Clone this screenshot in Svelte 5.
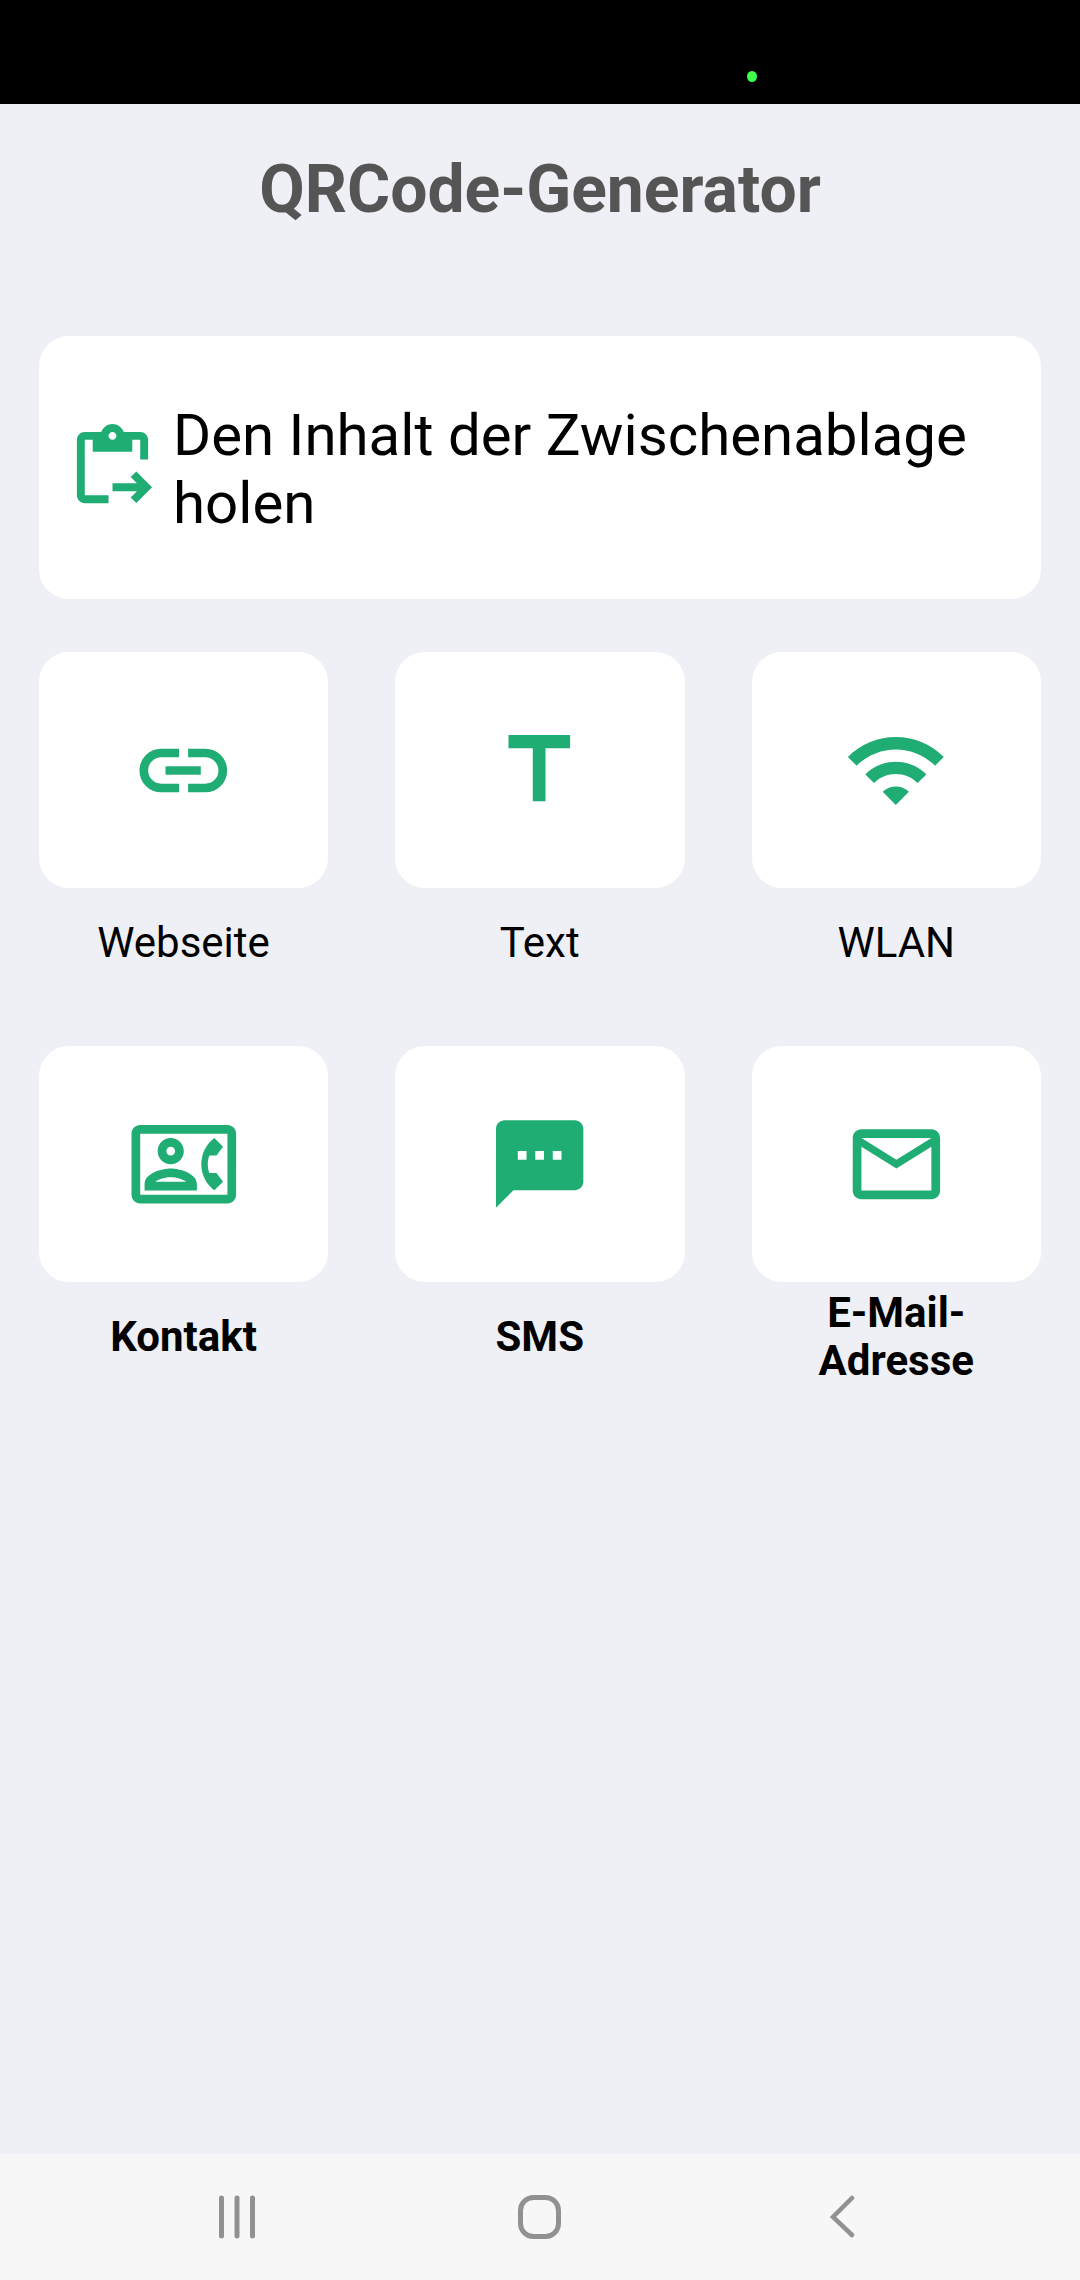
<script>
  const tiles = [
    { label: 'Webseite', vb: '4.2 -1 120 100', id: 'link' },
    { label: 'Text', vb: '0.2 -1 120 100', id: 't' },
    { label: 'WLAN', vb: '6.5 -1 120 100', id: 'wifi' },
    { label: 'Kontakt', vb: '3.5 3 120 100', id: 'contact', bold: true },
    { label: 'SMS', vb: '-0.25 3 120 100', id: 'sms', bold: true },
    { label: 'E-Mail-Adresse', vb: '6 3 120 100', id: 'mail', bold: true }
  ];
</script>

<div class="page">
  <div class="status"><span class="dot"></span></div>
  <h1>QRCode-Generator</h1>

  <div class="card">
    <svg class="clip" viewBox="0 0 24 24" aria-hidden="true">
      <path d="M5,5h2v3h10V5h2v5h2V5c0-1.1-0.9-2-2-2h-4.18C14.4,1.84,13.3,1,12,1S9.6,1.84,9.18,3H5C3.9,3,3,3.9,3,5v14c0,1.1,0.9,2,2,2h6v-2H5V5z M12,3c0.55,0,1,0.45,1,1s-0.45,1-1,1s-1-0.45-1-1S11.45,3,12,3z" />
      <path d="M18.01,13l-1.42,1.41l1.58,1.58H12v2h6.17l-1.58,1.58l1.42,1.41l3.99-4L18.01,13z" />
    </svg>
    <span class="cardtext">Den Inhalt der Zwischenablage holen</span>
  </div>

  <div class="grid">
    {#each tiles as t}
      <div class="item">
        <div class="tile">
          <svg class="ico" viewBox={t.vb} aria-hidden="true">
            {#if t.id === 'link'}
              <path class="st" d="M59.3 32H41.5a17.5 17.5 0 0 0 0 35H59.3" />
              <path class="st" d="M68.3 32H85.5a17.5 17.5 0 0 1 0 35H68.3" />
              <rect x="45.7" y="45.3" width="35.3" height="8.4" />
            {:else if t.id === 't'}
              <path d="M28.7 14H90.3V27.3H65.7V80.3H53V27.3H28.7z" />
            {:else if t.id === 'wifi'}
              <path transform="translate(14 -3.3) scale(4.36)" d="M1 9l2 2c4.97-4.97 13.03-4.97 18 0l2-2C16.93 2.93 7.08 2.93 1 9zm8 8l3 3 3-3c-1.65-1.66-4.34-1.66-6 0zm-4-4l2 2c2.76-2.76 7.24-2.76 10 0l2-2C15.14 9.14 8.87 9.14 5 13z" />
            {:else if t.id === 'contact'}
              <path transform="translate(11 0.9) scale(4.36)" d="M22 3H2C.9 3 0 3.9 0 5v14c0 1.1.9 2 2 2h20c1.1 0 1.99-.9 1.99-2L24 5c0-1.1-.9-2-2-2zm0 16H2V5h20v14zm-2.99-1.01L21 16l-1.51-2h-1.64c-.22-.63-.35-1.3-.35-2s.13-1.37.35-2h1.64L21 8l-1.99-1.99c-1.31.98-2.28 2.37-2.73 3.99-.18.64-.28 1.31-.28 2s.1 1.36.28 2c.45 1.61 1.42 3.01 2.73 3.99zM9 12c1.65 0 3-1.35 3-3s-1.35-3-3-3-3 1.35-3 3 1.35 3 3 3zm0-4c.55 0 1 .45 1 1s-.45 1-1 1-1-.45-1-1 .45-1 1-1zm6 8.59c0-2.5-3.97-3.58-6-3.58s-6 1.08-6 3.58V18h12v-1.41zM5.48 16c.74-.5 2.22-1 3.52-1s2.77.49 3.52 1H5.48z" />
            {:else if t.id === 'sms'}
              <path transform="translate(6.96 0.56) scale(4.37)" d="M20 2H4c-1.1 0-1.99.9-1.99 2L2 22l4-4h14c1.1 0 2-.9 2-2V4c0-1.1-.9-2-2-2zM9 11H7V9h2v2zm4 0h-2V9h2v2zm4 0h-2V9h2v2z" />
            {:else}
              <path transform="translate(13.96 0.8) scale(4.37)" d="M20 4H4c-1.1 0-1.99.9-1.99 2L2 18c0 1.1.9 2 2 2h16c1.1 0 2-.9 2-2V6c0-1.1-.9-2-2-2zm0 14H4V8l8 5 8-5v10zm-8-7L4 6h16l-8 5z" />
            {/if}
          </svg>
        </div>
        <div class="label" class:bold={t.bold}>{t.label}</div>
      </div>
    {/each}
  </div>

  <nav class="nav">
    <svg class="navico" viewBox="0 0 44 44" aria-hidden="true">
      <path d="M6.5 3V41M22 3V41M37.5 3V41" />
    </svg>
    <svg class="navico" viewBox="0 0 44 44" aria-hidden="true">
      <rect x="2.5" y="2.5" width="38" height="39" rx="13" />
    </svg>
    <svg class="navico" viewBox="0 0 44 44" aria-hidden="true">
      <path class="back" d="M31 3L12 22L31 40" />
    </svg>
  </nav>
</div>

<style>
  :global(body) {
    margin: 0;
    background: #eef0f5;
  }
  .page {
    display: flex;
    flex-direction: column;
    height: 2280px;
    background: #eef0f5;
    font-family: Roboto, sans-serif;
    color: #000;
  }
  .status {
    display: flex;
    align-items: flex-start;
    box-sizing: border-box;
    height: 104px;
    padding: 71px 0 0 747px;
    background: #000;
  }
  .dot {
    width: 10px;
    height: 11px;
    border-radius: 50%;
    background: #3dff4a;
  }
  h1 {
    margin: 0 0 62px;
    height: 170px;
    line-height: 172px;
    text-align: center;
    font-size: 66px;
    font-weight: 700;
    color: #555555;
  }
  .card {
    display: flex;
    align-items: center;
    gap: 13px;
    box-sizing: border-box;
    height: 263px;
    margin: 0 39px;
    padding: 0 30px 0 26px;
    border-radius: 30px;
    background: #fff;
  }
  .clip {
    flex: none;
    width: 95px;
    height: 95px;
    fill: #20ad74;
  }
  .cardtext {
    padding-top: 2px;
    font-size: 58.2px;
    line-height: 68px;
  }
  .grid {
    display: grid;
    grid-template-columns: 289px 289.5px 289.5px;
    column-gap: 67px;
    row-gap: 50px;
    margin: 53px 39px 0;
  }
  .item {
    display: flex;
    flex-direction: column;
  }
  .tile {
    display: flex;
    align-items: center;
    justify-content: center;
    height: 236px;
    border-radius: 30px;
    background: #fff;
  }
  .ico {
    width: 120px;
    height: 100px;
    fill: #20ad74;
  }
  .st {
    fill: none;
    stroke: #20ad74;
    stroke-width: 8.7;
  }
  .label {
    display: flex;
    align-items: center;
    justify-content: center;
    box-sizing: border-box;
    height: 108px;
    padding: 2px 40px 0;
    text-align: center;
    font-size: 42px;
    line-height: 48px;
  }
  .bold {
    font-weight: 700;
  }
  .nav {
    display: grid;
    grid-template-columns: repeat(3, 1fr);
    justify-items: center;
    align-items: center;
    height: 126px;
    margin-top: auto;
    padding: 0 85.5px;
    background: #f7f7f7;
  }
  .navico {
    width: 44px;
    height: 44px;
    fill: none;
    stroke: #919191;
    stroke-width: 5;
    stroke-linecap: round;
  }
  .back {
    stroke-width: 4.5;
  }
</style>
